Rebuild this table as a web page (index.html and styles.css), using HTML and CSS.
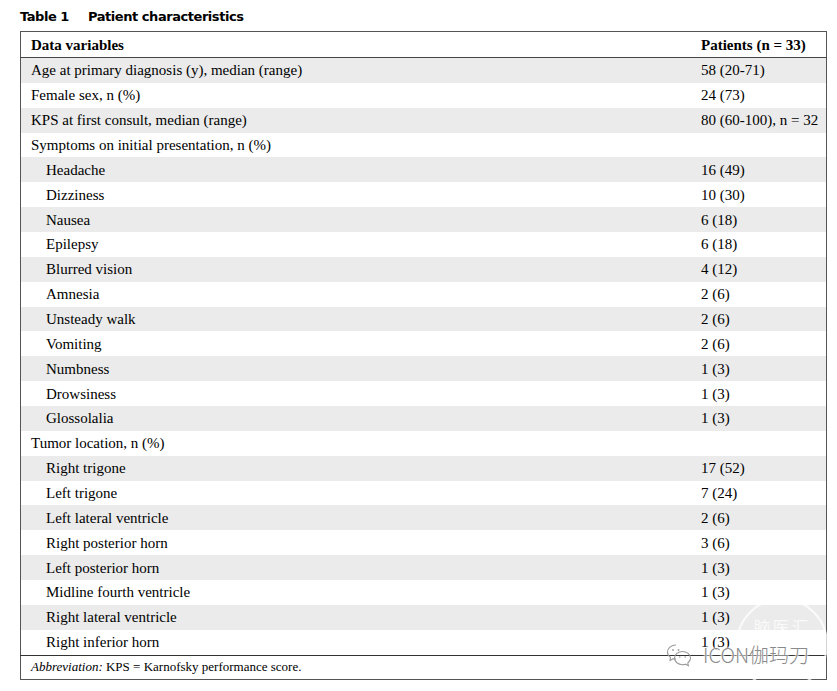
FILE: index.html
```html
<!DOCTYPE html>
<html>
<head>
<meta charset="utf-8">
<link rel="stylesheet" href="styles.css">
</head>
<body>
<div class="page">
  <div class="title"><span class="tnum">Table 1</span><span class="tname">Patient characteristics</span></div>
  <table class="tbl">
    <thead>
      <tr><th class="c1">Data variables</th><th class="c2">Patients (n = 33)</th></tr>
    </thead>
    <tbody>
      <tr class="sh"><td class="c1">Age at primary diagnosis (y), median (range)</td><td class="c2">58 (20-71)</td></tr>
      <tr><td class="c1">Female sex, n (%)</td><td class="c2">24 (73)</td></tr>
      <tr class="sh"><td class="c1">KPS at first consult, median (range)</td><td class="c2">80 (60-100), n = 32</td></tr>
      <tr><td class="c1">Symptoms on initial presentation, n (%)</td><td class="c2"></td></tr>
      <tr class="sh"><td class="c1 in">Headache</td><td class="c2">16 (49)</td></tr>
      <tr><td class="c1 in">Dizziness</td><td class="c2">10 (30)</td></tr>
      <tr class="sh"><td class="c1 in">Nausea</td><td class="c2">6 (18)</td></tr>
      <tr><td class="c1 in">Epilepsy</td><td class="c2">6 (18)</td></tr>
      <tr class="sh"><td class="c1 in">Blurred vision</td><td class="c2">4 (12)</td></tr>
      <tr><td class="c1 in">Amnesia</td><td class="c2">2 (6)</td></tr>
      <tr class="sh"><td class="c1 in">Unsteady walk</td><td class="c2">2 (6)</td></tr>
      <tr><td class="c1 in">Vomiting</td><td class="c2">2 (6)</td></tr>
      <tr class="sh"><td class="c1 in">Numbness</td><td class="c2">1 (3)</td></tr>
      <tr><td class="c1 in">Drowsiness</td><td class="c2">1 (3)</td></tr>
      <tr class="sh"><td class="c1 in">Glossolalia</td><td class="c2">1 (3)</td></tr>
      <tr><td class="c1">Tumor location, n (%)</td><td class="c2"></td></tr>
      <tr class="sh"><td class="c1 in">Right trigone</td><td class="c2">17 (52)</td></tr>
      <tr><td class="c1 in">Left trigone</td><td class="c2">7 (24)</td></tr>
      <tr class="sh"><td class="c1 in">Left lateral ventricle</td><td class="c2">2 (6)</td></tr>
      <tr><td class="c1 in">Right posterior horn</td><td class="c2">3 (6)</td></tr>
      <tr class="sh"><td class="c1 in">Left posterior horn</td><td class="c2">1 (3)</td></tr>
      <tr><td class="c1 in">Midline fourth ventricle</td><td class="c2">1 (3)</td></tr>
      <tr class="sh"><td class="c1 in">Right lateral ventricle</td><td class="c2">1 (3)</td></tr>
      <tr><td class="c1 in">Right inferior horn</td><td class="c2">1 (3)</td></tr>
    </tbody>
    <tfoot>
      <tr><td class="foot" colspan="2"><i>Abbreviation:</i> KPS = Karnofsky performance score.</td></tr>
    </tfoot>
  </table>
  <div class="stamp"><span>脑医汇</span></div>
  <div class="wm">
    <svg class="wx" width="26" height="26" viewBox="0 0 26 26" fill="none" stroke="#9a9a9a" stroke-width="1.1">
      <path d="M10 3C5 3 1.5 6.2 1.5 10c0 2.2 1.2 4.1 3 5.4L4 18.5l3.2-1.8c0.9 0.3 1.8 0.4 2.8 0.4"/>
      <path d="M16.5 9.5c4.4 0 8 3 8 6.6 0 2-1 3.7-2.7 4.9l0.6 2.7-2.8-1.5c-1 0.3-2 0.5-3.1 0.5-4.4 0-8-3-8-6.6s3.6-6.6 8-6.6z"/>
      <circle cx="7" cy="8" r="0.9" fill="#9a9a9a" stroke="none"/>
      <circle cx="12.5" cy="8" r="0.9" fill="#9a9a9a" stroke="none"/>
      <circle cx="13.8" cy="15" r="0.8" fill="#9a9a9a" stroke="none"/>
      <circle cx="19.2" cy="15" r="0.8" fill="#9a9a9a" stroke="none"/>
    </svg>
    <span class="wtext">ICON伽玛刀</span>
  </div>
</div>
</body>
</html>
```

FILE: styles.css
```css
html, body {
  margin: 0;
  padding: 0;
  background: #ffffff;
}
.page {
  position: relative;
  width: 837px;
  height: 691px;
  padding: 8px 0 0 20px;
  box-sizing: border-box;
}
.title {
  font-family: "DejaVu Sans", "Liberation Sans", sans-serif;
  font-weight: bold;
  font-size: 13px;
  letter-spacing: -0.45px;
  color: #000;
  height: 23px;
  line-height: 17px;
}
.tnum {
  display: inline-block;
  width: 68px;
}
.tbl {
  width: 807px;
  border-collapse: collapse;
  border: 1.5px solid #555;
  font-family: "Liberation Serif", "DejaVu Serif", serif;
  font-size: 15px;
  color: #000;
}
.tbl th, .tbl td {
  height: 24.87px;
  padding: 0;
  text-align: left;
  vertical-align: middle;
  line-height: 20px;
}
.tbl th {
  height: 25px;
  font-weight: bold;
  border-bottom: 1px solid #444;
}
.c1 {
  padding-left: 10px !important;
}
.c1.in {
  padding-left: 25px !important;
}
.c2 {
  width: 125px;
}
.sh td {
  background: #ebebeb;
}
.foot {
  border-top: 1px solid #333;
  font-size: 13px;
  padding-left: 10px !important;
  height: 23px !important;
  line-height: 20px !important;
}
.stamp {
  position: absolute;
  left: 736px;
  top: 598px;
  width: 92px;
  height: 92px;
  border: 2px solid rgba(255,255,255,0.75);
  border-radius: 50%;
  box-sizing: border-box;
  font-family: "Noto Sans CJK SC", sans-serif;
  font-size: 17px;
  color: rgba(255,255,255,0.75);
  text-align: center;
  padding-top: 14px;
  letter-spacing: 2px;
}
.wm {
  position: absolute;
  left: 666px;
  top: 640px;
  display: flex;
  align-items: center;
  gap: 11px;
}
.wtext {
  font-family: "Noto Sans CJK SC", "DejaVu Sans", sans-serif;
  font-weight: 300;
  font-size: 20px;
  color: #8a8a8a;
  letter-spacing: 0;
  text-shadow: 0 0 2px #fff, 0 0 2px #fff, 0 0 3px #fff;
}
```
